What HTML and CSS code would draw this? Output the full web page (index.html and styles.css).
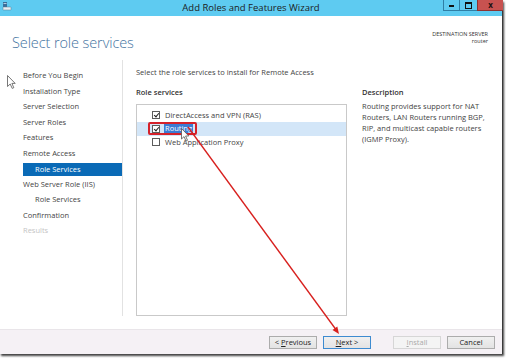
FILE: index.html
```html
<!DOCTYPE html>
<html lang="en">
<head>
  <meta charset="UTF-8">
  <title>Add Roles and Features Wizard</title>
  <link rel="stylesheet" href="styles.css">
</head>
<body>
  <div class="window">

    <!-- Title bar -->
    <div class="titlebar">
      <div class="app-icon">
        <svg viewBox="0 0 10 10" width="10" height="10">
          <rect x="1" y="1" width="4" height="5" fill="#3a6f9a"/>
          <rect x="1.5" y="2" width="3" height="0.8" fill="#cfe6f5"/>
          <rect x="1" y="6" width="8" height="3" rx="0.5" fill="#e8eef2" stroke="#5a7a90" stroke-width="0.5"/>
        </svg>
      </div>
      <div class="title">Add Roles and Features Wizard</div>
      <div class="controls">
        <span class="ctl ctl-min"><i></i></span>
        <span class="ctl ctl-max"><i></i></span>
        <span class="ctl ctl-close">x</span>
      </div>
    </div>

    <!-- Page header -->
    <div class="header">
      <h1>Select role services</h1>
      <div class="dest">
        <div>DESTINATION SERVER</div>
        <div>router</div>
      </div>
    </div>

    <div class="main">
      <!-- Wizard steps -->
      <ul class="nav">
        <li>Before You Begin</li>
        <li>Installation Type</li>
        <li>Server Selection</li>
        <li>Server Roles</li>
        <li>Features</li>
        <li>Remote Access</li>
        <li class="sub active">Role Services</li>
        <li>Web Server Role (IIS)</li>
        <li class="sub">Role Services</li>
        <li>Confirmation</li>
        <li class="disabled">Results</li>
      </ul>

      <div class="content">
        <p class="intro">Select the role services to install for Remote Access</p>
        <div class="columns">
          <div class="services">
            <div class="label">Role services</div>
            <div class="listbox">
              <div class="row"><span class="check on"></span><span>DirectAccess and VPN (RAS)</span></div>
              <div class="row selected">
                <span class="marker"><span class="check on"></span><span class="sel-text">Routing</span></span>
              </div>
              <div class="row"><span class="check"></span><span>Web Application Proxy</span></div>
            </div>
          </div>
          <div class="description">
            <div class="label">Description</div>
            <p>Routing provides support for NAT Routers, LAN Routers running BGP, RIP, and multicast capable routers (IGMP Proxy).</p>
          </div>
        </div>
      </div>
    </div>

    <!-- Buttons -->
    <div class="footer">
      <button class="btn">&lt; <u>P</u>revious</button>
      <button class="btn default"><u>N</u>ext &gt;</button>
      <button class="btn disabled gap"><u>I</u>nstall</button>
      <button class="btn">Cancel</button>
    </div>
  </div>

  <!-- Annotation drawn over the screenshot -->
  <svg class="overlay" width="506" height="359" viewBox="0 0 506 359">
    <path class="cursor" d="M7.5 75.5 L7.5 86.5 L10.2 84 L12.2 88.4 L13.8 87.7 L11.9 83.4 L15.2 83.4 Z"/>
    <path class="cursor" d="M181.5 128.5 L181.5 139 L184 136.6 L186 141 L187.5 140.3 L185.6 136 L188.8 136 Z"/>
    <line x1="188" y1="127" x2="337" y2="331" stroke="#d8201e" stroke-width="1.3"/>
    <polygon points="339,334 332.5,330.1 337.3,326.5" fill="#d8201e"/>
  </svg>
</body>
</html>
```

FILE: styles.css
```css
body {
  margin: 0;
  background: #fff;
  font-family: "Open Sans", "Noto Sans", sans-serif;
  font-size: 7.5px;
  color: #444;
  width: 506px;
  height: 359px;
  overflow: hidden;
  position: relative;
}

/* Whole wizard window */
.window {
  width: 502px;
  height: 354px;
  display: flex;
  flex-direction: column;
  border-right: 1px solid #3a3a3a;
  box-shadow: 1px 2px 2px rgba(0, 0, 0, 0.75);
  background: #fff;
}

.titlebar {
  height: 16px;
  background: #5ecbf1;
  display: grid;
  grid-template-columns: 1fr auto 1fr;
  align-items: start;
  flex-shrink: 0;
}
.app-icon {
  padding: 1px 0 0 2px;
  line-height: 0;
}
.title {
  font-size: 9.5px;
  line-height: 15px;
  color: #1c1c1c;
}
.controls {
  justify-self: end;
  display: flex;
  margin-right: -1px;
}
.ctl {
  height: 11px;
  width: 16px;
  display: flex;
  align-items: center;
  justify-content: center;
  border-left: 1px solid #2f7fa6;
  border-bottom: 1px solid #2f7fa6;
  box-sizing: border-box;
}
.ctl-min i {
  width: 5px;
  height: 2px;
  background: #111;
  margin-top: 2px;
}
.ctl-max {
  width: 18px;
}
.ctl-max i {
  width: 5px;
  height: 4px;
  border: 1px solid #111;
  border-top-width: 2px;
}
.ctl-close {
  width: 26px;
  background: #c85250;
  border-color: #8e3331;
  color: #201010;
  font-weight: bold;
  font-size: 8px;
  line-height: 10px;
}

.header {
  height: 44px;
  display: flex;
  justify-content: space-between;
  padding: 0 14px 0 12px;
  flex-shrink: 0;
}
h1 {
  margin: 17px 0 0;
  font-size: 14.5px;
  font-weight: 300;
  color: #43739f;
  letter-spacing: -0.1px;
}
.dest {
  margin-top: 15px;
  text-align: right;
  font-size: 5.5px;
  line-height: 7px;
  color: #333;
}

.main {
  flex: 1;
  display: flex;
  padding-bottom: 13px;
}

.nav {
  list-style: none;
  margin: 0;
  padding: 8px 0 0 23px;
  width: 99px;
  border-right: 1px solid #e2e2e2;
}
.nav li {
  height: 15.5px;
  line-height: 15.5px;
  white-space: nowrap;
}
.nav .sub {
  padding-left: 12px;
}
.nav .active {
  background: #0a6ab6;
  color: #fff;
  height: 13px;
  line-height: 13px;
  margin: 1.5px 0 1px;
}
.nav .disabled {
  color: #c4c4c4;
}

.content {
  flex: 1;
  padding: 7px 0 0 13px;
  display: flex;
  flex-direction: column;
}
.intro {
  margin: 0;
  line-height: 10px;
}
.columns {
  flex: 1;
  display: flex;
  gap: 15px;
  margin-top: 10px;
}
.label {
  line-height: 10px;
  font-weight: 600;
  color: #333;
}

.services {
  width: 211px;
  display: flex;
  flex-direction: column;
}
.listbox {
  flex: 1;
  margin-top: 7px;
  border: 1px solid #c9c9c9;
  padding-top: 3.5px;
}
.row {
  height: 13.5px;
  display: flex;
  align-items: center;
  padding-left: 15px;
}
.row.selected {
  background: #d3e6f8;
  padding-left: 11px;
}
.marker {
  display: flex;
  align-items: center;
  border: 2px solid #d5212a;
  border-radius: 2px;
  height: 13px;
  padding: 0 2px 0 2px;
  box-sizing: border-box;
}
.check {
  width: 8px;
  height: 8px;
  border: 1px solid #5c5c5c;
  box-sizing: border-box;
  margin-right: 5px;
  background: #fff;
  position: relative;
  flex-shrink: 0;
}
.check.on::after {
  content: "";
  position: absolute;
  left: 1.5px;
  top: 0;
  width: 2px;
  height: 4px;
  border: solid #222;
  border-width: 0 1px 1px 0;
  transform: rotate(40deg);
}
.sel-text {
  background: #3b7bd4;
  color: #fff;
  line-height: 9px;
  padding: 0 1px;
  margin-left: -1px;
}

.description {
  width: 128px;
}
.description p {
  margin: 4px 0 0;
  line-height: 11px;
}

.footer {
  height: 25px;
  flex-shrink: 0;
  background: #f5f1f5;
  border-top: 1px solid #e9e5e9;
  box-sizing: border-box;
  display: flex;
  align-items: center;
  justify-content: flex-end;
  gap: 6px;
  padding: 0 7px 0 0;
}
.btn {
  width: 48px;
  height: 13px;
  padding: 0;
  font-family: inherit;
  font-size: 7.5px;
  color: #222;
  background: linear-gradient(#f0f0f0, #e3e3e3);
  border: 1px solid #acacac;
}
.btn.default {
  border-color: #3d8bd0;
}
.btn.disabled {
  color: #aaa;
  background: #f4f4f4;
  border-color: #d6d6d6;
}
.btn.gap {
  margin-left: 16px;
}

.overlay {
  position: absolute;
  top: 0;
  left: 0;
  pointer-events: none;
}
.cursor {
  fill: #fff;
  stroke: #555;
  stroke-width: 0.8;
}
```
